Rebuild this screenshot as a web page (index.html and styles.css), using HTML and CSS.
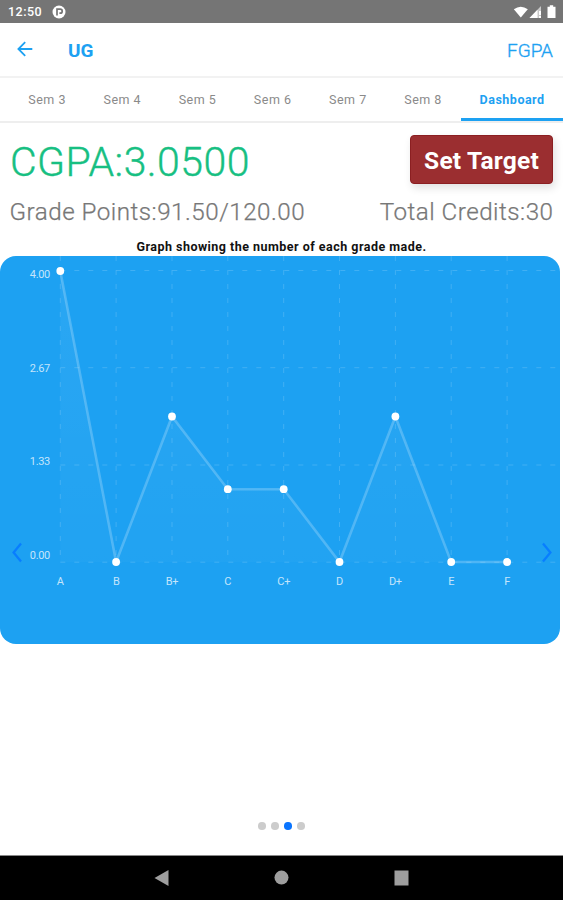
FILE: index.html
```html
<!DOCTYPE html>
<html lang="en">
<head>
    <meta charset="UTF-8">
    <meta name="viewport" content="width=device-width, initial-scale=1.0">
    <title>FGPA - Dashboard</title>
    <link rel="stylesheet" href="styles.css">
</head>
<body>
    <div class="status-bar">
        <span class="clock">12:50</span>
        <svg class="app-icon" width="14" height="14" viewBox="0 0 14 14">
            <circle cx="7" cy="7" r="6.5" fill="#fff"/>
            <path d="M5 10.5V4.2h3.2a2 2 0 0 1 0 4H7.4" fill="none" stroke="#757575" stroke-width="1.7"/>
        </svg>
        <svg class="system-icons" width="44" height="16" viewBox="0 0 44 16" fill="#fff">
            <path d="M0.8 5.2Q7.8 0.2 14.8 5.2L7.8 13.5Z"/>
            <path d="M16.5 14L28 2V14Z" fill-opacity=".6"/>
            <path d="M16.5 14L24.5 5.8V14ZM26 7h2v4h-2zM26 12h2v2h-2z"/>
            <path d="M34.5 2.7h2.3V1.2h3.4v1.5h2.3V14h-8z"/>
        </svg>
    </div>

    <header>
        <svg class="back" width="16" height="16" viewBox="0 0 16 16">
            <path d="M15.3 8H1.5M8.2 1.2L1.4 8L8.2 14.8" fill="none" stroke="#1da1f2" stroke-width="1.8"/>
        </svg>
        <h1>UG</h1>
        <span class="brand">FGPA</span>
    </header>

    <nav class="tabs">
        <a class="tab">Sem 3</a>
        <a class="tab">Sem 4</a>
        <a class="tab">Sem 5</a>
        <a class="tab">Sem 6</a>
        <a class="tab">Sem 7</a>
        <a class="tab">Sem 8</a>
        <a class="tab active">Dashboard</a>
    </nav>

    <main>
        <div class="summary">
            <div class="cgpa">CGPA:3.0500</div>
            <button class="target">Set Target</button>
        </div>
        <div class="totals">
            <span class="points">Grade Points:91.50/120.00</span>
            <span class="credits">Total Credits:30</span>
        </div>
        <h2>Graph showing the number of each grade made.</h2>

        <div class="chart">
            <svg width="560" height="388" viewBox="0 0 560 388">
                <defs>
                    <linearGradient id="area" x1="0" y1="0" x2="0" y2="1">
                        <stop offset="0" stop-color="#fff" stop-opacity=".06"/>
                        <stop offset="1" stop-color="#fff" stop-opacity=".02"/>
                    </linearGradient>
                </defs>
                <path class="grid" d="M60.3 14.5H560M60.3 111.7H560M60.3 209H560M60.3 306.2H560"/>
                <path class="grid" d="M60.3 0V306M116.1 0V306M172 0V306M227.8 0V306M283.7 0V306M339.5 0V306M395.4 0V306M451.2 0V306M507.1 0V306"/>
                <path fill="url(#area)" d="M60.3 15L116.1 306L172 160.5L227.8 233.2H283.7L339.5 306L395.4 160.5L451.2 306H60.3Z"/>
                <path class="line" d="M60.3 15L116.1 306L172 160.5L227.8 233.2H283.7L339.5 306L395.4 160.5L451.2 306H507.1"/>
                <g fill="#fff">
                    <circle cx="60.3" cy="15" r="3.9"/>
                    <circle cx="116.1" cy="306" r="3.9"/>
                    <circle cx="172" cy="160.5" r="3.9"/>
                    <circle cx="227.8" cy="233.2" r="3.9"/>
                    <circle cx="283.7" cy="233.2" r="3.9"/>
                    <circle cx="339.5" cy="306" r="3.9"/>
                    <circle cx="395.4" cy="160.5" r="3.9"/>
                    <circle cx="451.2" cy="306" r="3.9"/>
                    <circle cx="507.1" cy="306" r="3.9"/>
                </g>
                <g class="label" text-anchor="end">
                    <text x="50" y="22">4.00</text>
                    <text x="50" y="115.5">2.67</text>
                    <text x="50" y="209">1.33</text>
                    <text x="50" y="302.5">0.00</text>
                </g>
                <g class="label" text-anchor="middle">
                    <text x="60.3" y="328.5">A</text>
                    <text x="116.3" y="328.5">B</text>
                    <text x="172" y="328.5">B+</text>
                    <text x="227.8" y="328.5">C</text>
                    <text x="283.7" y="328.5">C+</text>
                    <text x="339.5" y="328.5">D</text>
                    <text x="395.4" y="328.5">D+</text>
                    <text x="451.2" y="328.5">E</text>
                    <text x="507.1" y="328.5">F</text>
                </g>
                <path class="arrow" d="M21 287.5L13.6 296.5L21 305.5"/>
                <path class="arrow" d="M543 287.5L550.4 296.5L543 305.5"/>
            </svg>
        </div>

        <div class="dots">
            <span class="dot"></span>
            <span class="dot"></span>
            <span class="dot current"></span>
            <span class="dot"></span>
        </div>
    </main>

    <footer>
        <svg width="16" height="18" viewBox="0 0 16 18"><path d="M0.5 9L14.5 1V17Z" fill="#9e9e9e"/></svg>
        <svg width="16" height="18" viewBox="0 0 16 18"><circle cx="7.5" cy="8.6" r="7" fill="#9e9e9e"/></svg>
        <svg width="16" height="18" viewBox="0 0 16 18"><rect x="0.5" y="1.5" width="14" height="15" fill="#9e9e9e"/></svg>
    </footer>
</body>
</html>
```
FILE: styles.css
```css
* {
    margin: 0;
    padding: 0;
    box-sizing: border-box;
    font-family: Roboto, sans-serif;
}

body {
    height: 900px;
    display: flex;
    flex-direction: column;
    background: #fff;
    overflow: hidden;
}

.status-bar {
    height: 23px;
    background: #757575;
    color: #fff;
    display: flex;
    align-items: center;
    padding: 0 7px 0 8px;
}

.clock {
    font-size: 12.5px;
    font-weight: 500;
    letter-spacing: 0.5px;
    margin-right: 10px;
}

.app-icon {
    margin-top: 1px;
}

.system-icons {
    margin-left: auto;
    margin-right: -1px;
}

header {
    height: 55px;
    display: flex;
    align-items: center;
    padding: 0 10px 0 17px;
    color: #1da1f2;
    border-bottom: 2px solid #f2f2f2;
}

.back {
    margin-top: -2px;
}

header h1 {
    font-size: 19px;
    font-weight: 700;
    margin-left: 35px;
    padding-top: 1px;
}

.brand {
    margin-left: auto;
    font-size: 19px;
    font-weight: 300;
    padding-top: 1px;
    -webkit-text-stroke: 0.35px #1da1f2;
}

.tabs {
    height: 45px;
    display: flex;
    border-bottom: 2px solid #eee;
}

.tab {
    width: 75.2px;
    flex-shrink: 0;
    height: 43px;
    text-align: center;
    font-size: 12.5px;
    line-height: 43px;
    letter-spacing: 0.5px;
    color: #8a8a8a;
}

.tab:first-child {
    margin-left: 9.5px;
}

.tab.active {
    width: 103px;
    color: #1da1f2;
    font-weight: 700;
    border-bottom: 3px solid #1da1f2;
}

main {
    flex: 1;
    display: flex;
    flex-direction: column;
}

.summary {
    display: flex;
    justify-content: space-between;
    padding: 12px 10px 0;
}

.cgpa {
    font-size: 41px;
    font-weight: 300;
    line-height: 54px;
    height: 53px;
    letter-spacing: 0.45px;
    color: #17bf82;
    -webkit-text-stroke: 0.4px #17bf82;
}

.target {
    width: 143px;
    height: 49px;
    border: 1px solid #8b1f22;
    border-radius: 4px;
    background: #9b2e30;
    color: #fff;
    font-size: 24.5px;
    font-weight: 700;
    letter-spacing: 0.2px;
    padding-top: 1px;
    box-shadow: 2px 4px 9px rgba(0, 0, 0, 0.12);
}

.totals {
    display: flex;
    justify-content: space-between;
    padding: 8px 9.5px 0;
    font-size: 24.2px;
    font-weight: 300;
    line-height: 32px;
    letter-spacing: 0.5px;
    color: #777;
    -webkit-text-stroke: 0.25px #777;
}

h2 {
    margin-top: 12px;
    height: 16px;
    text-align: center;
    font-size: 12.5px;
    font-weight: 700;
    line-height: 14px;
    letter-spacing: 0.48px;
    color: #111;
}

.chart {
    width: 560px;
    height: 388px;
    border-radius: 16px;
    background: #1da1f2;
    overflow: hidden;
}

.chart svg {
    display: block;
}

.grid {
    fill: none;
    stroke: #fff;
    stroke-opacity: 0.16;
    stroke-width: 1;
    stroke-dasharray: 5 9;
}

.line {
    fill: none;
    stroke: #fff;
    stroke-opacity: 0.22;
    stroke-width: 2.6;
}

.label {
    font-size: 11px;
    letter-spacing: -0.3px;
    fill: #c5e5fb;
}

.arrow {
    fill: none;
    stroke: #087eff;
    stroke-width: 2.3;
}

.dots {
    display: flex;
    justify-content: center;
    gap: 5.4px;
    margin-top: auto;
    padding-bottom: 25px;
}

.dot {
    width: 7.6px;
    height: 7.6px;
    border-radius: 50%;
    background: #ccc;
}

.dot.current {
    background: #0a75ff;
}

footer {
    height: 45px;
    background: #000;
    border-top: 1px solid #888;
    display: flex;
    justify-content: center;
    align-items: center;
    gap: 104px;
}
```
